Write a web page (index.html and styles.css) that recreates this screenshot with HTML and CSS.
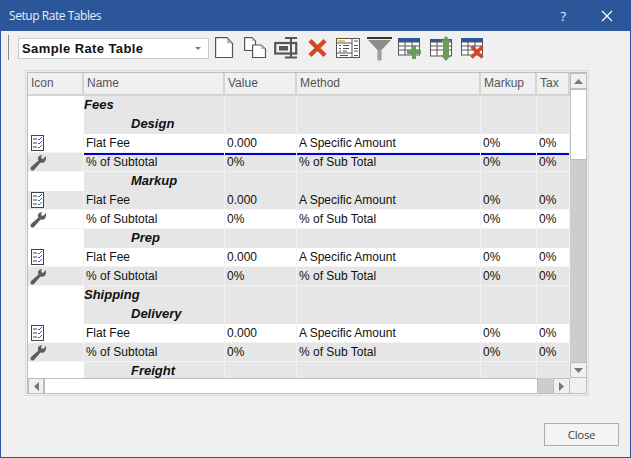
FILE: index.html
```html
<!DOCTYPE html>
<html lang="en">
<head>
    <meta charset="UTF-8">
    <title>Setup Rate Tables</title>
    <link rel="stylesheet" href="styles.css">
</head>
<body>
    <div class="window">
        <div class="titlebar">
            <span class="title">Setup Rate Tables</span>
            <span class="help">?</span>
            <svg class="close-x" width="12" height="12" viewBox="0 0 12 12"><path d="M1 1L11 11M11 1L1 11" stroke="#fff" stroke-width="1.2" fill="none"/></svg>
        </div>

        <div class="toolbar">
            <div class="grip"></div>
            <div class="combo">
                <span>Sample Rate Table</span>
                <svg width="6" height="3" viewBox="0 0 6 3"><path d="M0 0H6L3 3Z" fill="#777"/></svg>
            </div>
            <svg class="tool tool-new" width="19" height="24" viewBox="0 0 19 24"><path d="M.6 .6H12L17.500 6.500V20.500H.6Z" fill="#fff" stroke="#555" stroke-width="1.2"/><path d="M12 1V6.500H17Z" fill="#bbb"/></svg>
            <svg class="tool tool-copy" width="23" height="24" viewBox="0 0 23 24"><path d="M.6 .6H8L11.500 4V13.500H.6Z" fill="#fff" stroke="#555" stroke-width="1.2"/><path d="M8 1V4H11Z" fill="#bbb"/><path d="M8.600 8H17L21.500 12V20.500H8.600Z" fill="#fff" stroke="#555" stroke-width="1.2"/><path d="M17 8V12H21Z" fill="#bbb"/></svg>
            <svg class="tool tool-rename" width="24" height="24" viewBox="0 0 24 24"><rect x="1.200" y="6" width="21" height="10.500" fill="none" stroke="#555" stroke-width="2.200"/><rect x="5" y="9" width="9" height="4.500" fill="#555"/><path d="M11 1H23M17 1V20.500M11 20.500H23" fill="none" stroke="#555" stroke-width="2"/></svg>
            <svg class="tool tool-del" width="21" height="24" viewBox="0 0 21 24"><path d="M3 3.500L18 18.500M18 3.500L3 18.500" stroke="#d24726" stroke-width="4.500" fill="none"/></svg>
            <svg class="tool tool-form" width="24" height="24" viewBox="0 0 24 24"><rect x=".5" y="1.500" width="23" height="19" fill="#fff" stroke="#555"/><rect x="2" y="3" width="7" height="2" fill="#fbc04a"/><path d="M16 2V20M1 16H16M1 6H16" stroke="#555" fill="none"/><path d="M3 8.500H5M7 8.500H13M3 11.500H5M7 11.500H13M3 14H5M7 14H11M18 4H22M18 8.500H22M18 11.500H22M18 14H22M4 18.500H12M18 18.500H22" stroke="#555" fill="none"/></svg>
            <svg class="tool tool-filter" width="25" height="24" viewBox="0 0 25 24"><rect width="25" height="2" fill="#333"/><path d="M1 3H24L14.500 13V23H10.500V13Z" fill="#8c8c8c"/><path d="M11.500 13H13.500V24H11.500Z" fill="#a8a8a8"/></svg>
            <svg class="tool tool-addrow" width="27" height="24" viewBox="0 0 27 24"><use href="#table-base" y="1"/><path d="M16 8V22M9 15H23" stroke="#6c9a57" stroke-width="4" fill="none"/></svg>
            <svg class="tool tool-insert" width="23" height="24" viewBox="0 0 23 24"><rect y="2" width="22" height="3" fill="#2b579a"/><rect x=".5" y="5" width="21" height="14" fill="#fff" stroke="#555"/><path d="M1 9H21M1 13H21M7 5V19" stroke="#555" fill="none"/><path d="M16 4V20" stroke="#6c9a57" stroke-width="6" fill="none"/><path d="M16 -1L21.500 5H10.500ZM16 24L21.500 18H10.500Z" fill="#6c9a57"/></svg>
            <svg class="tool tool-delrow" width="24" height="24" viewBox="0 0 24 24"><use href="#table-base" y="1"/><path d="M10.500 9.500L21.500 20.500M21.500 9.500L10.500 20.500" stroke="#d24726" stroke-width="3.500" fill="none"/></svg>
        </div>

        <svg class="defs" width="0" height="0">
            <symbol id="table-base" viewBox="0 0 27 23" width="27" height="23" overflow="visible">
                <rect width="22" height="4" fill="#2b579a"/>
                <rect x=".5" y="4" width="21" height="13" fill="#fff" stroke="#555"/>
                <path d="M1 8H21M1 12H21M7 4V17M14 4V17" stroke="#555" fill="none"/>
            </symbol>
            <symbol id="checklist" viewBox="0 0 13 16" width="13" height="16">
                <rect x=".5" y=".5" width="12" height="15" fill="#fff" stroke="#444"/>
                <path d="M2 4H6M2 8H6M2 12H6" stroke="#444" fill="none"/>
                <path d="M7 4L8 5L11 2M7 8L8 9L11 6M7 12L8 13L11 10" stroke="#2f6fc4" fill="none"/>
            </symbol>
            <symbol id="wrench" viewBox="0 0 17 16" width="17" height="16">
                <path d="M16 1L13 4L11 3L12 0Q9 0 8 2.500Q7.500 4.500 8.500 5.500L1 12Q0 13.500 1 15Q2.500 16 4 15L10.500 7.500Q13 8.500 15 6.500Q16.500 4.500 16 1Z" fill="#5c5c5c"/>
            </symbol>
        </svg>

        <div class="grid-frame">
            <div class="grid">
                <div class="grid-body">
                    <div class="row head">
                        <div>Icon</div><div>Name</div><div>Value</div><div>Method</div><div>Markup</div><div>Tax</div>
                    </div>

                    <div class="row group"><div></div><div class="l1">Fees</div><div></div><div></div><div></div><div></div></div>
                    <div class="row group"><div></div><div class="l2">Design</div><div></div><div></div><div></div><div></div></div>
                    <div class="row flat selected"><div class="ic"><svg><use href="#checklist"/></svg></div><div>Flat Fee</div><div>0.000</div><div>A Specific Amount</div><div>0%</div><div>0%</div></div>
                    <div class="row pct"><div class="ic wr"><svg><use href="#wrench"/></svg></div><div>% of Subtotal</div><div>0%</div><div>% of Sub Total</div><div>0%</div><div>0%</div></div>

                    <div class="row group"><div></div><div class="l2">Markup</div><div></div><div></div><div></div><div></div></div>
                    <div class="row pct"><div class="ic"><svg><use href="#checklist"/></svg></div><div>Flat Fee</div><div>0.000</div><div>A Specific Amount</div><div>0%</div><div>0%</div></div>
                    <div class="row flat"><div class="ic wr"><svg><use href="#wrench"/></svg></div><div>% of Subtotal</div><div>0%</div><div>% of Sub Total</div><div>0%</div><div>0%</div></div>

                    <div class="row group"><div></div><div class="l2">Prep</div><div></div><div></div><div></div><div></div></div>
                    <div class="row flat"><div class="ic"><svg><use href="#checklist"/></svg></div><div>Flat Fee</div><div>0.000</div><div>A Specific Amount</div><div>0%</div><div>0%</div></div>
                    <div class="row pct"><div class="ic wr"><svg><use href="#wrench"/></svg></div><div>% of Subtotal</div><div>0%</div><div>% of Sub Total</div><div>0%</div><div>0%</div></div>

                    <div class="row group"><div></div><div class="l1">Shipping</div><div></div><div></div><div></div><div></div></div>
                    <div class="row group"><div></div><div class="l2">Delivery</div><div></div><div></div><div></div><div></div></div>
                    <div class="row flat"><div class="ic"><svg><use href="#checklist"/></svg></div><div>Flat Fee</div><div>0.000</div><div>A Specific Amount</div><div>0%</div><div>0%</div></div>
                    <div class="row pct"><div class="ic wr"><svg><use href="#wrench"/></svg></div><div>% of Subtotal</div><div>0%</div><div>% of Sub Total</div><div>0%</div><div>0%</div></div>

                    <div class="row group last"><div></div><div class="l2">Freight</div><div></div><div></div><div></div><div></div></div>
                </div>
                <div class="vscroll">
                    <div class="sb-btn v"><svg width="9" height="5" viewBox="0 0 9 5"><path d="M4.500 0L9 5H0Z" fill="#777"/></svg></div>
                    <div class="vthumb"></div>
                    <div class="sb-track"></div>
                    <div class="sb-btn v"><svg width="9" height="5" viewBox="0 0 9 5"><path d="M0 0H9L4.500 5Z" fill="#777"/></svg></div>
                </div>
                <div class="hscroll">
                    <div class="sb-btn h"><svg width="5" height="9" viewBox="0 0 5 9"><path d="M5 0V9L0 4.500Z" fill="#777"/></svg></div>
                    <div class="hthumb"></div>
                    <div class="sb-track"></div>
                    <div class="sb-btn h"><svg width="5" height="9" viewBox="0 0 5 9"><path d="M0 0V9L5 4.500Z" fill="#777"/></svg></div>
                </div>
            </div>
        </div>

        <div class="footer">
            <button class="close-btn">Close</button>
        </div>
    </div>
</body>
</html>
```

FILE: styles.css
```css
html, body {
    margin: 0;
    padding: 0;
    height: 100%;
    overflow: hidden;
}
body {
    font-family: "Liberation Sans", Arial, sans-serif;
    font-size: 12px;
    color: #111;
}
.window {
    box-sizing: border-box;
    width: 631px;
    height: 458px;
    background-color: #f0f0f0;
    border: 1px solid #2b579a;
    border-top: none;
    display: flex;
    flex-direction: column;
}
.titlebar {
    flex: none;
    height: 31px;
    margin: 0 -1px;
    background-color: #2b579a;
    color: #e8eef7;
    display: flex;
    align-items: center;
    padding: 0 18px 0 9px;
}
.title {
    font-family: "Open Sans", sans-serif;
    font-size: 12px;
    letter-spacing: -.45px;
    flex: 1;
}
.help {
    font-family: "Open Sans", sans-serif;
    font-size: 13px;
    margin-right: 35px;
}
.toolbar {
    flex: none;
    height: 32px;
    display: flex;
    align-items: center;
    padding: 4px 0 0 7px;
    box-sizing: border-box;
}
.grip {
    width: 1px;
    height: 25px;
    background-color: #8a8a8a;
    margin: 0 9px 3px 0;
}
.combo {
    box-sizing: border-box;
    width: 191px;
    height: 21px;
    margin-bottom: 1px;
    background-color: #fff;
    border: 1px solid #ccc;
    display: flex;
    align-items: center;
    justify-content: space-between;
    padding: 0 7px 0 3px;
    font-size: 13px;
    font-weight: bold;
    letter-spacing: .4px;
}
.tool {
    flex: none;
    overflow: visible;
}
.tool-new { margin-left: 6px; }
.tool-copy { margin-left: 10px; }
.tool-rename { margin-left: 7px; }
.tool-del { margin-left: 9px; }
.tool-form { margin-left: 8px; }
.tool-filter { margin-left: 7px; }
.tool-addrow { margin-left: 6px; }
.tool-insert { margin-left: 5px; }
.tool-delrow { margin-left: 8px; }
.defs {
    position: absolute;
}
.grid-frame {
    flex: none;
    box-sizing: border-box;
    width: 564px;
    height: 326px;
    margin: 7px 0 0 24px;
    border: 1px solid #dcdcdc;
    padding: 1px;
}
.grid {
    box-sizing: border-box;
    height: 100%;
    border: 1px solid #bdbdbd;
    background-color: #f0f0f0;
    display: grid;
    grid-template-columns: 542px 17px;
    grid-template-rows: 305px 16px;
    overflow: hidden;
}
.grid-body {
    overflow: hidden;
    background-color: #e6e6e6;
}
.row {
    display: grid;
    grid-template-columns: 56px 141px 72px 184px 56px 33px;
    height: 19px;
}
.row > div {
    box-sizing: border-box;
    height: 19px;
    line-height: 18px;
    padding-left: 2px;
    white-space: nowrap;
    border-right: 1px solid #f2f2f2;
    border-bottom: 1px solid #f2f2f2;
}
.row.head {
    height: 23px;
}
.row.head > div {
    height: 23px;
    line-height: 21px;
    padding-left: 3px;
    background-color: #f0f0f0;
    color: #555;
    border-right: 2px solid #d4d4d4;
    border-bottom: 2px solid #d4d4d4;
}
.row.group > div:first-child {
    background-color: #fff;
    border-color: #fff;
}
.row.group > div {
    background-color: #e6e6e6;
    border-bottom-color: #e6e6e6;
}
.row.flat > div {
    background-color: #fff;
}
.row.pct > div {
    background-color: #e6e6e6;
}
.row.selected + .row > div:not(:first-child) {
    box-shadow: inset 0 2px #0000d8;
}
.row .l1, .row .l2 {
    font-weight: bold;
    font-style: italic;
    font-size: 13px;
    padding-left: 0;
}
.row .l2 {
    padding-left: 47px;
}
.row .ic {
    padding: 1px 0 0 3px;
}
.row .ic.wr {
    padding: 2px 0 0 2px;
}
.ic svg {
    display: block;
    width: 17px;
    height: 16px;
}
.vscroll {
    display: flex;
    flex-direction: column;
    background-color: #f0f0f0;
}
.hscroll {
    display: flex;
    background-color: #f0f0f0;
}
.sb-btn {
    box-sizing: border-box;
    flex: none;
    background-color: #f0f0f0;
    border: 1px solid #bdbdbd;
    display: flex;
    align-items: center;
    justify-content: center;
}
.sb-btn.v {
    height: 16px;
}
.sb-btn.h {
    width: 16px;
}
.sb-btn.h:last-child {
    width: 17px;
}
.vthumb {
    box-sizing: border-box;
    height: 71px;
    background-color: #fff;
    border: 1px solid #bdbdbd;
    flex: none;
}
.hthumb {
    box-sizing: border-box;
    width: 494px;
    background-color: #fff;
    border: 1px solid #bdbdbd;
    flex: none;
}
.sb-track {
    flex: 1;
    background-color: #cdcdcd;
}
.footer {
    flex: 1;
    display: flex;
    justify-content: flex-end;
    align-items: flex-start;
    padding: 27px 11px 0 0;
}
.close-btn {
    box-sizing: border-box;
    width: 75px;
    height: 23px;
    background-color: #f4f4f4;
    border: 1px solid #adadad;
    font-family: "Open Sans", sans-serif;
    font-size: 11.5px;
    letter-spacing: -.3px;
    color: #444;
    padding: 0;
}
```
